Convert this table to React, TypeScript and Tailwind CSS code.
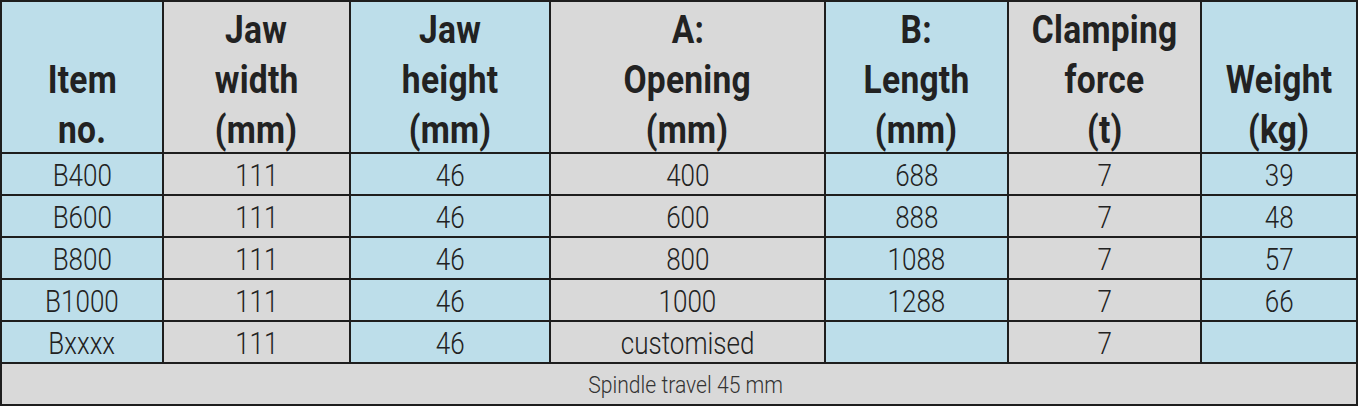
const font = {
  fontFamily: 'Roboto, "DejaVu Sans Condensed", "Liberation Sans", sans-serif',
};

const headers = [
  ['Item', 'no.'],
  ['Jaw', 'width', '(mm)'],
  ['Jaw', 'height', '(mm)'],
  ['A:', 'Opening', '(mm)'],
  ['B:', 'Length', '(mm)'],
  ['Clamping', 'force', '(t)'],
  ['Weight', '(kg)'],
];

const rows = [
  ['B400', '111', '46', '400', '688', '7', '39'],
  ['B600', '111', '46', '600', '888', '7', '48'],
  ['B800', '111', '46', '800', '1088', '7', '57'],
  ['B1000', '111', '46', '1000', '1288', '7', '66'],
  ['Bxxxx', '111', '46', 'customised', '', '7', ''],
];

const bg = (i: number) => (i % 2 === 0 ? 'bg-[#bddeea]' : 'bg-[#d9d9d9]');

export default function App() {
  return (
    <div className="w-[1359px] h-[406px] bg-white" style={font}>
      <div className="grid w-[1358px] grid-cols-[160px_185px_198px_273px_181px_191px_154px] grid-rows-[150px_40px_40px_40px_40px_40px_40px] gap-[2px] bg-[#1e1e1e] p-[2px] text-[#222]">
        {headers.map((lines, i) => (
          <div
            key={i}
            className={`${bg(i)} flex flex-col items-center justify-end overflow-hidden`}
          >
            <div className="-mb-[3px] flex flex-col items-center text-[39px] font-bold leading-[50px] tracking-[0.3px]">
              {lines.map((l) => (
                <span key={l} className="inline-block scale-x-[0.86] whitespace-nowrap">
                  {l}
                </span>
              ))}
            </div>
          </div>
        ))}
        {rows.map((r, ri) =>
          r.map((v, ci) => (
            <div
              key={`${ri}-${ci}`}
              className={`${bg(ci)} flex items-center justify-center pt-[3px] text-[31px] font-light leading-none`}
            >
              <span className="inline-block scale-x-[0.84] whitespace-nowrap">{v}</span>
            </div>
          )),
        )}
        <div className="col-span-7 flex items-center justify-center bg-[#d9d9d9] pl-[14px] pt-[2px] text-[24px] font-light leading-none text-[#333]">
          <span className="inline-block scale-x-[0.88] whitespace-nowrap">Spindle travel 45 mm</span>
        </div>
      </div>
    </div>
  );
}
